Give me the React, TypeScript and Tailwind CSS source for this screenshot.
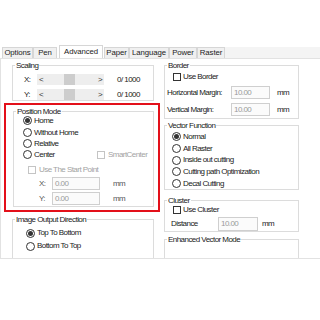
import type { ReactNode } from 'react';

const Radio = ({ checked = false }: { checked?: boolean }) => (
  <span className="flex h-[9px] w-[9px] shrink-0 items-center justify-center rounded-full border border-[#333] bg-white">
    {checked && <span className="h-[5px] w-[5px] rounded-full bg-[#333]" />}
  </span>
);

const Check = ({ disabled = false }: { disabled?: boolean }) => (
  <span
    className={`h-[8px] w-[8px] shrink-0 border bg-white ${disabled ? 'border-[#c4c4c4]' : 'border-[#333]'}`}
  />
);

const Field = ({ value, w }: { value: string; w: string }) => (
  <span
    className={`flex h-[13px] ${w} shrink-0 items-center border border-[#cfcfcf] bg-[#fbfbfb] pl-[2px] text-[#9a9a9a]`}
  >
    {value}
  </span>
);

const Group = ({
  title,
  className,
  children,
}: {
  title: string;
  className: string;
  children?: ReactNode;
}) => (
  <div className={`relative border border-[#dcdcdc] ${className}`}>
    <span className="absolute -top-[5px] left-[2px] bg-white px-[1px] leading-[9px]">
      {title}
    </span>
    {children}
  </div>
);

const Scroll = () => (
  <span className="flex h-[11px] w-[67px] items-center bg-[#eeeeee] text-[#333]">
    <span className="w-[9px] pl-[2px] leading-none">&lt;</span>
    <span className="ml-[18px] h-[11px] w-[11px] bg-[#cdcdcd]" />
    <span className="ml-auto w-[9px] pr-[2px] text-right leading-none">&gt;</span>
  </span>
);

const tabs = ['Options', 'Pen', 'Advanced', 'Paper', 'Language', 'Power', 'Raster'];
const tabW: Record<string, string> = {
  Options: 'w-[31px]',
  Pen: 'w-[24px]',
  Advanced: 'w-[44px]',
  Paper: 'w-[25px]',
  Language: 'w-[40px]',
  Power: 'w-[28px]',
  Raster: 'w-[28px]',
};

const RadioRow = ({ label, checked, className }: { label: string; checked?: boolean; className: string }) => (
  <div className={`flex h-[11px] items-center gap-[2px] ${className}`}>
    <Radio checked={checked} />
    <span>{label}</span>
  </div>
);

const App = () => {
  return (
    <div className="relative flex h-[320px] w-[320px] flex-col overflow-hidden bg-white font-['Liberation_Sans',Arial,sans-serif] text-[8px] tracking-[-0.55px] text-[#222]">
      <div className="h-[45px]" />

      {/* tabs */}
      <div className="flex h-[13px] items-end pl-[2px] text-[7.8px] tracking-[-0.1px]">
        {tabs.map((t) => {
          const sel = t === 'Advanced';
          return (
            <div
              key={t}
              className={`flex ${tabW[t]} items-center justify-center border-x border-t border-[#d6d6d6] ${
                sel ? 'ml-[2px] mr-[1px] h-[13px] bg-white' : 'h-[11px] bg-[#f0f0f0]'
              }`}
            >
              {t}
            </div>
          );
        })}
        <div className="h-[11px] flex-1 bg-[#f4f4f4]" />
      </div>

      {/* page */}
      <div className="flex h-[201px] border-b border-l border-t border-[#e2e2e2]">
        {/* left column */}
        <div className="flex w-[161px] flex-col pl-[11px]">
          <Group title="Scaling" className="mt-[6px] h-[37px] w-[142px]">
            <div className="mt-[8px] flex h-[11px] items-center">
              <span className="w-[24px] pl-[11px]">X:</span>
              <Scroll />
              <span className="ml-[13px]">0/ 1000</span>
            </div>
            <div className="mt-[4px] flex h-[11px] items-center">
              <span className="w-[24px] pl-[11px]">Y:</span>
              <Scroll />
              <span className="ml-[13px]">0/ 1000</span>
            </div>
          </Group>

          <Group title="Position Mode" className="ml-[1px] mt-[10px] h-[98px] w-[141px]">
            <RadioRow label="Home" checked className="mt-[3px] pl-[9px]" />
            <RadioRow label="Without Home" className="mt-[1px] pl-[9px]" />
            <RadioRow label="Relative" className="pl-[9px]" />
            <div className="flex h-[11px] items-center pl-[9px]">
              <div className="flex w-[74px] items-center gap-[2px]">
                <Radio />
                <span>Center</span>
              </div>
              <Check disabled />
              <span className="ml-[3px] text-[#a3a3a3]">SmartCenter</span>
            </div>
            <div className="mt-[4px] flex h-[11px] items-center pl-[14px]">
              <Check disabled />
              <span className="ml-[3px] text-[#a3a3a3]">Use The Start Point</span>
            </div>
            <div className="mt-[2px] flex h-[13px] items-center pl-[25px]">
              <span className="w-[13px] text-[#555]">X:</span>
              <Field value="0.00" w="w-[48px]" />
              <span className="ml-[13px] text-[#555]">mm</span>
            </div>
            <div className="mt-[2px] flex h-[13px] items-center pl-[25px]">
              <span className="w-[13px] text-[#555]">Y:</span>
              <Field value="0.00" w="w-[48px]" />
              <span className="ml-[13px] text-[#555]">mm</span>
            </div>
          </Group>

          <Group title="Image Output Direction" className="mt-[12px] h-[40px] w-[142px] border-b-0">
            <RadioRow label="Top To Bottom" checked className="mt-[8px] pl-[13px]" />
            <RadioRow label="Bottom To Top" className="mt-[2px] pl-[13px]" />
          </Group>
        </div>

        {/* right column */}
        <div className="flex w-[136px] flex-col pl-[2px]">
          <Group title="Border" className="mt-[6px] h-[58px] w-[135px]">
            <div className="mt-[5px] flex h-[11px] items-center pl-[8px]">
              <Check />
              <span className="ml-[2px]">Use Border</span>
            </div>
            <div className="mt-[4px] flex h-[13px] items-center pl-[2px]">
              <span className="w-[64px]">Horizontal Margin:</span>
              <Field value="10.00" w="w-[39px]" />
              <span className="ml-[7px]">mm</span>
            </div>
            <div className="mt-[4px] flex h-[13px] items-center pl-[2px]">
              <span className="w-[64px]">Vertical Margin:</span>
              <Field value="10.00" w="w-[39px]" />
              <span className="ml-[7px]">mm</span>
            </div>
          </Group>

          <Group title="Vector Function" className="mt-[6px] h-[70px] w-[135px]">
            <RadioRow label="Normal" checked className="mt-[5px] pl-[7px]" />
            <RadioRow label="All Raster" className="mt-[1px] pl-[7px]" />
            <RadioRow label="Inside out cutting" className="mt-[0.5px] pl-[7px]" />
            <RadioRow label="Cutting path Optimization" className="mt-[0.5px] pl-[7px]" />
            <RadioRow label="Decal Cutting" className="mt-[1px] pl-[7px]" />
          </Group>

          <Group title="Cluster" className="mt-[10px] h-[34px] w-[135px]">
            <div className="mt-[3px] flex h-[11px] items-center pl-[8px]">
              <Check />
              <span className="ml-[2px]">Use Cluster</span>
            </div>
            <div className="mt-[2px] flex h-[14px] items-center pl-[6px]">
              <span className="w-[47px]">Distance</span>
              <Field value="10.00" w="w-[40px] h-[14px]" />
              <span className="ml-[4px]">mm</span>
            </div>
          </Group>

          <Group title="Enhanced Vector Mode" className="mt-[7px] h-[20px] w-[135px] border-b-0" />
        </div>
      </div>

      {/* annotation */}
      <div className="pointer-events-none absolute left-[4px] top-[103px] h-[109px] w-[156px] border-2 border-[#e3101a]" />
    </div>
  );
};

export default App;
